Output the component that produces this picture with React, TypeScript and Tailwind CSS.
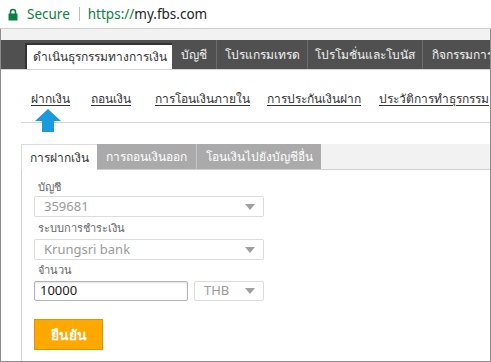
import React from "react"

const NAV = [
  { label: "บัญชี", w: "w-[45px]" },
  { label: "โปรแกรมเทรด", w: "w-[91px]" },
  { label: "โปรโมชั่นและโบนัส", w: "w-[115px]" },
  { label: "กิจกรรมการตลาด", w: "w-[110px]" },
]

const LINKS = [
  { label: "ฝากเงิน", w: "w-[60px]" },
  { label: "ถอนเงิน", w: "w-[64px]" },
  { label: "การโอนเงินภายใน", w: "w-[112px]" },
  { label: "การประกันเงินฝาก", w: "w-[112px]" },
  { label: "ประวัติการทำธุรกรรม", w: "w-[110px]" },
]

function Caret() {
  return (
    <svg width="10" height="6" viewBox="0 0 10 6" className="shrink-0">
      <polygon points="0,0 10,0 5,6" fill="#a0a0a0" />
    </svg>
  )
}

function Select({ value, className }: { value: string; className: string }) {
  return (
    <div
      className={`flex items-center justify-between pl-[9px] pr-[8px] border border-[#dcdcdc] rounded-[2px] bg-white text-[13px] text-[#9a9a9a] ${className}`}
    >
      <span>{value}</span>
      <Caret />
    </div>
  )
}

export default function App() {
  return (
    <div className="w-[491px] h-[362px] bg-white flex flex-col overflow-hidden font-['Noto_Sans','DejaVu_Sans',sans-serif]">
      {/* address bar */}
      <div className="h-[29px] shrink-0 border-b border-[#cfcfcf] flex items-center pl-[8px]">
        <svg width="10" height="13" viewBox="0 0 10 13">
          <path d="M2.5 6V4a2.5 2.5 0 0 1 5 0v2" fill="none" stroke="#0b8043" strokeWidth="1.6" />
          <rect x="0.5" y="5.5" width="9" height="7" rx="0.5" fill="#0b8043" />
        </svg>
        <span className="ml-[9px] text-[13.5px] text-[#0b8043]">Secure</span>
        <div className="ml-[9px] w-px h-[14px] bg-[#bdbdbd]" />
        <span className="ml-[8px] text-[13.5px]">
          <span className="text-[#0b8043]">https://</span>
          <span className="text-[#222]">my.fbs.com</span>
        </span>
      </div>

      <div className="flex-1 min-h-0 border-x border-b border-[#8c8c8c] flex flex-col">
        <div className="h-[11px] shrink-0 bg-[#f2f2f2]" />
        {/* main nav */}
        <div className="h-[30px] shrink-0 bg-[#505050] border-b border-[#d6d6d6] flex items-end pl-[24px] text-[12px] whitespace-nowrap overflow-hidden">
          <div className="w-[147px] shrink-0 h-[26px] bg-white border-l-2 border-t-2 border-[#333] flex items-center justify-center text-[#333]">
            ดำเนินธุรกรรมทางการเงิน
          </div>
          {NAV.map((n) => (
            <div
              key={n.label}
              className={`${n.w} shrink-0 h-[29px] border-r border-[#6c6c6c] flex items-center justify-center text-[#f0f0f0]`}
            >
              {n.label}
            </div>
          ))}
        </div>

        <div className="flex-1 min-h-0 pl-[20px] flex flex-col">
          {/* links */}
          <div className="relative pt-[21px] pl-[10px] flex text-[12px] leading-[16px] text-[#333] whitespace-nowrap">
            {LINKS.map((l) => (
              <div key={l.label} className={`${l.w} shrink-0`}>
                <span className="underline underline-offset-2">{l.label}</span>
              </div>
            ))}
            <svg width="26" height="23" viewBox="0 0 26 23" className="absolute left-[14px] top-[39px] z-10">
              <polygon points="13,0 26,12 19,12 19,23 7,23 7,12 0,12" fill="#1a9be0" />
            </svg>
          </div>
          <div className="mt-[15px] h-px bg-[#d4d4d4]" />

          {/* sub tabs */}
          <div className="mt-[21px] h-[26px] bg-[#f2f2f2] border-b border-[#d0d0d0] flex text-[12px] whitespace-nowrap">
            <div className="w-[76px] bg-white border-l border-t border-[#dcdcdc] flex items-center justify-center text-[#333] -mb-px">
              การฝากเงิน
            </div>
            <div className="w-[100px] bg-[#aaaaaa] border-r border-[#c6c6c6] flex items-center justify-center text-white">
              การถอนเงินออก
            </div>
            <div className="w-[124px] bg-[#aaaaaa] flex items-center justify-center text-white">
              โอนเงินไปยังบัญชีอื่น
            </div>
          </div>

          {/* form */}
          <div className="flex-1 border-l border-[#d0d0d0] pl-[12px] pt-[9px] flex flex-col">
            <div className="pl-[4px] h-[16px] leading-[16px] text-[11px] text-[#666]">บัญชี</div>
            <Select value="359681" className="w-[230px] h-[21px] mt-px" />
            <div className="pl-[4px] mt-[3px] h-[16px] leading-[16px] text-[11px] text-[#666]">ระบบการชำระเงิน</div>
            <Select value="Krungsri bank" className="w-[230px] h-[21px] mt-[3px]" />
            <div className="pl-[4px] mt-[2px] h-[16px] leading-[16px] text-[11px] text-[#666]">จำนวน</div>
            <div className="mt-[3px] flex gap-[6px]">
              <div className="w-[154px] h-[20px] border border-[#b4b4b4] rounded-[2px] shadow-[inset_0_1px_2px_rgba(0,0,0,0.12)] flex items-center pl-[5px] text-[13px] text-[#222]">
                10000
              </div>
              <Select value="THB" className="w-[70px] h-[20px]" />
            </div>
            <button
              type="button"
              className="mt-[18px] w-[69px] h-[31px] bg-[#ffa800] border border-[#e39300] text-white text-[14px] font-bold"
            >
              ยืนยัน
            </button>
          </div>
        </div>
      </div>
    </div>
  )
}
